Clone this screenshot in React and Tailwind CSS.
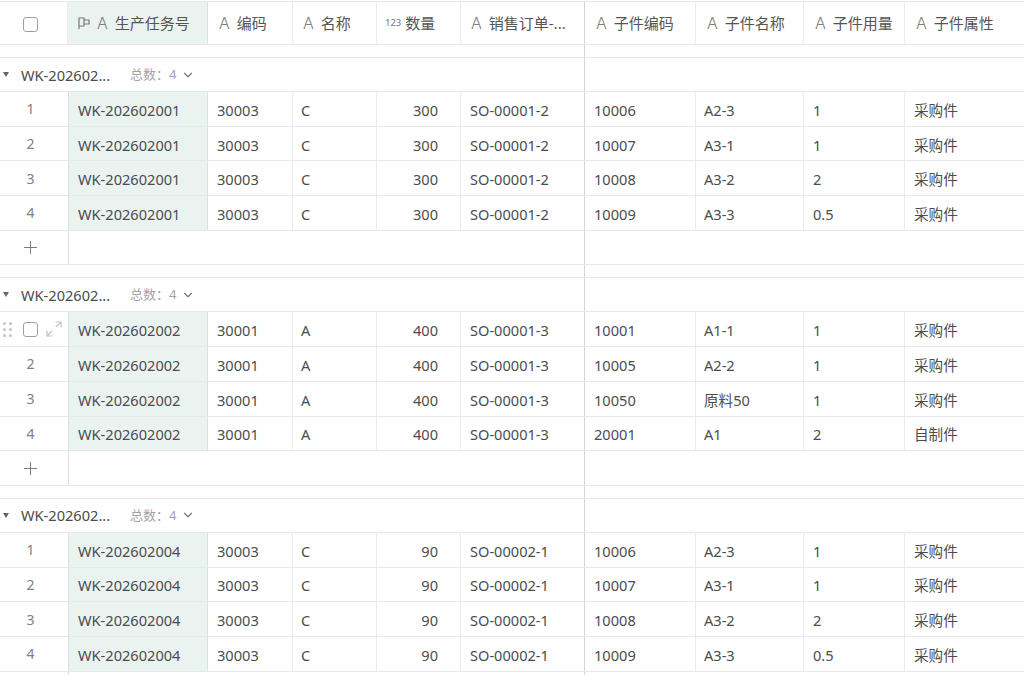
import { ChevronDown, Plus } from 'lucide-react';

const widths = 'grid-cols-[68px_140px_85px_84px_84px_124px_111px_108px_101px_119px]';

const groups = [
  {
    rows: [
      ['WK-202602001', '30003', 'C', '300', 'SO-00001-2', '10006', 'A2-3', '1', '采购件'],
      ['WK-202602001', '30003', 'C', '300', 'SO-00001-2', '10007', 'A3-1', '1', '采购件'],
      ['WK-202602001', '30003', 'C', '300', 'SO-00001-2', '10008', 'A3-2', '2', '采购件'],
      ['WK-202602001', '30003', 'C', '300', 'SO-00001-2', '10009', 'A3-3', '0.5', '采购件'],
    ],
  },
  {
    hover: true,
    rows: [
      ['WK-202602002', '30001', 'A', '400', 'SO-00001-3', '10001', 'A1-1', '1', '采购件'],
      ['WK-202602002', '30001', 'A', '400', 'SO-00001-3', '10005', 'A2-2', '1', '采购件'],
      ['WK-202602002', '30001', 'A', '400', 'SO-00001-3', '10050', '原料50', '1', '采购件'],
      ['WK-202602002', '30001', 'A', '400', 'SO-00001-3', '20001', 'A1', '2', '自制件'],
    ],
  },
  {
    rows: [
      ['WK-202602004', '30003', 'C', '90', 'SO-00002-1', '10006', 'A2-3', '1', '采购件'],
      ['WK-202602004', '30003', 'C', '90', 'SO-00002-1', '10007', 'A3-1', '1', '采购件'],
      ['WK-202602004', '30003', 'C', '90', 'SO-00002-1', '10008', 'A3-2', '2', '采购件'],
      ['WK-202602004', '30003', 'C', '90', 'SO-00002-1', '10009', 'A3-3', '0.5', '采购件'],
    ],
  },
];

const Checkbox = () => (
  <span className="block w-[15px] h-[15px] rounded-[3px] border border-[#a0a0a0] bg-white"></span>
);

const TypeA = () => (
  <span className="font-['Inter',sans-serif] font-light text-[16px] text-[#808080] mr-[7px]">A</span>
);

const HeaderCell = ({ label, divider, num, pad = 'pl-[11px]' }) => (
  <div className={`flex items-center ${pad} whitespace-nowrap border-r ${divider ? 'border-[#d4d4dc]' : 'border-[#ebebeb]'}`}>
    {num ? <span className="text-[9.5px] text-[#777] mr-[4px]">123</span> : <TypeA />}
    {label}
  </div>
);

const Spacer = () => (
  <div className="flex h-[12px]">
    <div className="w-[585px] border-r border-[#d4d4dc]"></div>
  </div>
);

const GroupHead = () => (
  <div className="flex h-[35px] border-y border-[#e8e8e8]">
    <div className="w-[585px] border-r border-[#d4d4dc] flex items-center">
      <svg width="6" height="5" viewBox="0 0 6 5" className="ml-[3px] mr-[12px]">
        <path d="M0 0h6L3 5z" fill="#666" />
      </svg>
      <span className="w-[109px] pt-[2px] text-[#4c4c4c] text-[14.6px]">WK-202602...</span>
      <span className="text-[13px] text-[#a3a3a3]">总数：4</span>
      <ChevronDown size={14} strokeWidth={2} className="ml-[5px] text-[#777]" />
    </div>
  </div>
);

const HoverControls = () => (
  <div className="flex items-center w-full">
    <svg width="9" height="15" viewBox="0 0 9 15" className="ml-[3px] mr-[11px]" fill="#c4c4c4">
      <circle cx="1.5" cy="1.5" r="1.5" />
      <circle cx="7.5" cy="1.5" r="1.5" />
      <circle cx="1.5" cy="7.5" r="1.5" />
      <circle cx="7.5" cy="7.5" r="1.5" />
      <circle cx="1.5" cy="13.5" r="1.5" />
      <circle cx="7.5" cy="13.5" r="1.5" />
    </svg>
    <Checkbox />
    <svg width="16" height="16" viewBox="0 0 16 16" className="ml-[8px]" fill="none" stroke="#c4c4c4" strokeWidth="1.2">
      <path d="M1 9.5V15h5.5M1 15l5-5M9.5 1H15v5.5M15 1l-5 5" />
    </svg>
  </div>
);

const Row = ({ row, index, hover }) => (
  <div className={`grid ${widths} h-[34.7px] border-b border-[#e8e8e8]`}>
    <div className={`flex items-center justify-center text-[#808080] text-[14px] ${hover ? '' : 'pr-[7px]'}`}>
      {hover ? <HoverControls /> : index + 1}
    </div>
    <div className="flex items-center pl-[9px] pt-[4px] bg-[#ebf3f0] border-x border-[#d8e2de]">{row[0]}</div>
    <div className="flex items-center pl-[9px] pt-[4px] border-r border-[#ebebeb]">{row[1]}</div>
    <div className="flex items-center pl-[8px] pt-[4px] border-r border-[#ebebeb]">{row[2]}</div>
    <div className="flex items-center justify-end pr-[22px] pt-[4px] border-r border-[#ebebeb]">{row[3]}</div>
    <div className="flex items-center pl-[9px] pt-[4px] border-r border-[#d4d4dc]">{row[4]}</div>
    <div className="flex items-center pl-[9px] pt-[4px] border-r border-[#ebebeb]">{row[5]}</div>
    <div className="flex items-center pl-[8px] pt-[4px] border-r border-[#ebebeb]">{row[6]}</div>
    <div className="flex items-center pl-[9px] pt-[4px] border-r border-[#ebebeb]">{row[7]}</div>
    <div className="flex items-center pl-[9px] pt-[4px]">{row[8]}</div>
  </div>
);

const AddRow = () => (
  <div className="flex h-[34.7px] border-b border-[#e8e8e8]">
    <div className="w-[69px] flex items-center justify-center pr-[8px] border-r border-[#e0e0e0] text-[#777]">
      <Plus size={21} strokeWidth={1.1} />
    </div>
    <div className="w-[516px] border-r border-[#d4d4dc]"></div>
  </div>
);

export default function App() {
  return (
    <div className="w-[1024px] h-[675px] overflow-hidden bg-white text-[14.6px] text-[#4c4c4c] font-['Noto_Sans','Noto_Sans_CJK_SC',sans-serif]">
      <div className={`grid ${widths} h-[44px] mt-[1px] border-y border-[#e8e8e8] text-[15px] text-[#555]`}>
        <div className="flex items-center justify-center pr-[6px] pt-[2px] border-r border-[#ebebeb]">
          <Checkbox />
        </div>
        <div className="flex items-center pl-[10px] bg-[#ebf3f0] border-r border-[#d8e2de] whitespace-nowrap">
          <svg width="12" height="12" viewBox="0 0 12 12" fill="none" stroke="#777" strokeWidth="1.2" className="mr-[7px]">
            <path d="M1 12V1h5v8H1M6 3h5v4H6" />
          </svg>
          <TypeA />
          生产任务号
        </div>
        <HeaderCell label="编码" />
        <HeaderCell label="名称" pad="pl-[10px]" />
        <HeaderCell label="数量" num pad="pl-[8px]" />
        <HeaderCell label="销售订单-..." divider pad="pl-[10px]" />
        <HeaderCell label="子件编码" />
        <HeaderCell label="子件名称" />
        <HeaderCell label="子件用量" />
        <div className="flex items-center pl-[11px] whitespace-nowrap"><TypeA />子件属性</div>
      </div>
      {groups.map((group, g) => (
        <div key={g}>
          <Spacer />
          <GroupHead />
          {group.rows.map((row, i) => (
            <Row key={i} row={row} index={i} hover={group.hover && i === 0} />
          ))}
          <AddRow />
        </div>
      ))}
    </div>
  );
}
